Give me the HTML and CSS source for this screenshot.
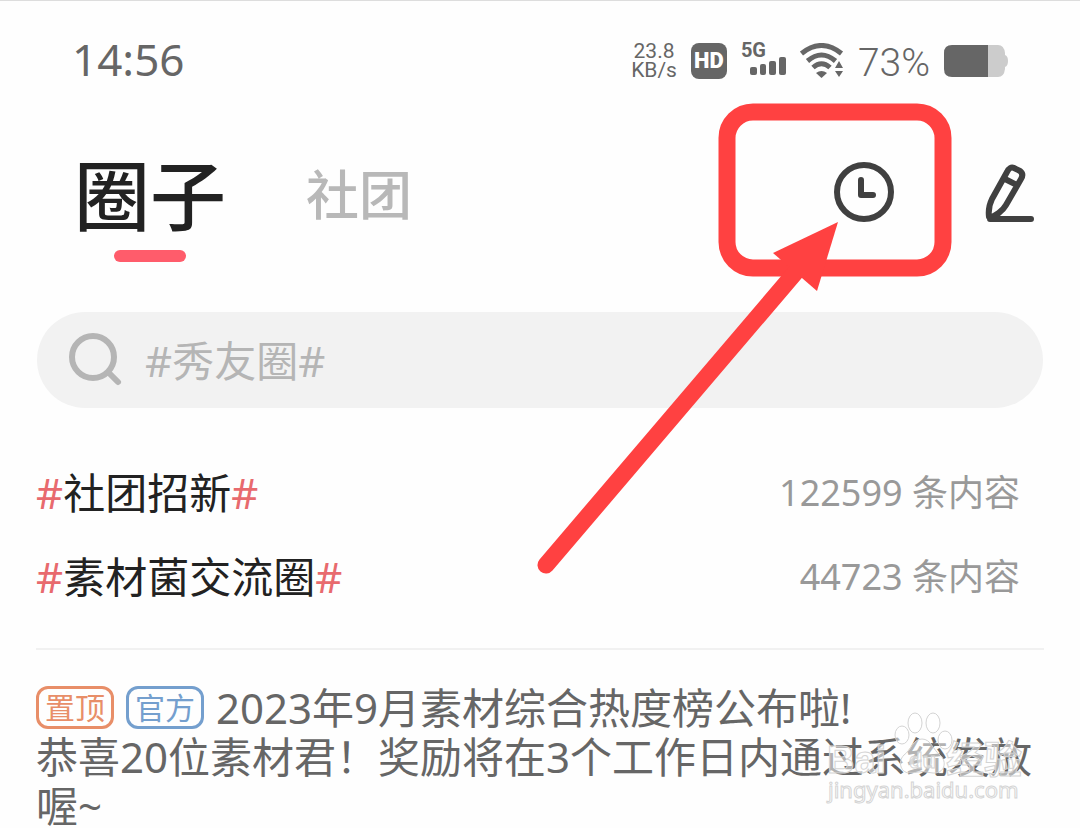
FILE: index.html
```html
<!DOCTYPE html>
<html lang="zh-CN">
<head>
<meta charset="utf-8">
<meta name="viewport" content="width=device-width, initial-scale=1">
<title>圈子</title>
<link rel="stylesheet" href="styles.css">
</head>

<body>
<div class="page">

	<!-- 状态栏 -->
	<div class="status">
		<span class="time">14:56</span>
		<div class="status-right">
			<span class="speed">23.8<br>KB/s</span>
			<span class="hd">HD</span>
			<div class="signal">
				<span>5G</span>
				<svg width="36" height="18" viewBox="0 0 36 18" fill="#666">
					<rect x="0" y="10" width="7" height="8" rx="2"/>
					<rect x="10" y="7" width="6" height="11" rx="2"/>
					<rect x="19" y="4" width="7" height="14" rx="2"/>
					<rect x="29" y="0" width="7" height="18" rx="2"/>
				</svg>
			</div>
			<svg class="wifi" width="44" height="36" viewBox="0 0 44 36">
				<g fill="none" stroke="#666" stroke-width="5">
					<path d="M1.500 10.500Q21.500 -5.500 41.500 10.500"/>
					<path d="M7.500 18Q21.500 6 35.500 18"/>
					<path d="M13 24.500Q21.500 17 30 24.500"/>
				</g>
				<path d="M16 30Q21.500 26 27 30L21.500 35Z" fill="#666"/>
				<path d="M35 25L39 18L43 25ZM35 28L39 34L43 28Z" fill="#666"/>
			</svg>
			<span class="percent">73%</span>
			<svg class="battery" width="64" height="32" viewBox="0 0 64 32">
				<path d="M44 0H54Q60 0 61 8V10Q64 11 64 16Q64 21 61 22V24Q60 32 54 32H44Z" fill="#ccc"/>
				<path d="M8 0H44V32H8Q0 32 0 24V8Q0 0 8 0Z" fill="#666"/>
			</svg>
		</div>
	</div>

	<!-- 顶部导航 -->
	<div class="header">
		<div class="tabs">
			<button class="tab active">圈子</button>
			<button class="tab">社团</button>
		</div>
		<div class="tools">
			<button class="tool" aria-label="历史">
				<svg width="60" height="60" viewBox="0 0 60 60" fill="none" stroke="#404040" stroke-width="6" stroke-linecap="round" stroke-linejoin="round">
					<circle cx="30" cy="30" r="27"/>
					<path d="M27 18V33H39"/>
				</svg>
			</button>
			<button class="tool" aria-label="发布">
				<svg width="50" height="60" viewBox="0 0 50 60" fill="none" stroke="#404040" stroke-width="6" stroke-linecap="round" stroke-linejoin="round">
					<path d="M4 55C3 47 4 43 7 37L22 10Q25 4 29 6L35 9Q39 12 36 17L21 43C17 50 11 53 5 56ZM20 17L32 23M5 57H46"/>
				</svg>
			</button>
		</div>
	</div>

	<!-- 搜索 -->
	<label class="search">
		<svg width="54" height="54" viewBox="0 0 54 54" fill="none" stroke="#b5b5b5" stroke-width="6" stroke-linecap="round">
			<circle cx="24" cy="24" r="21"/>
			<path d="M40 40L49 49"/>
		</svg>
		<input type="text" placeholder="#秀友圈#" aria-label="搜索">
	</label>

	<!-- 话题 -->
	<ul class="topics">
		<li>
			<a href="#"><i>#</i>社团招新<i>#</i></a>
			<span class="count">122599 条内容</span>
		</li>
		<li>
			<a href="#"><i>#</i>素材菌交流圈<i>#</i></a>
			<span class="count">44723 条内容</span>
		</li>
	</ul>

	<!-- 公告 -->
	<div class="post">
		<div class="post-title">
			<span class="tag top">置顶</span>
			<span class="tag official">官方</span>
			<span>2023年9月素材综合热度榜公布啦!</span>
		</div>
		<p>恭喜20位素材君！奖励将在3个工作日内通过系统发放喔~</p>
	</div>

	<!-- 箭头标注 -->
	<svg class="mark" width="425" height="480" viewBox="530 100 425 480">
		<rect x="727" y="112" width="216" height="156" rx="26" fill="none" stroke="#ff4141" stroke-width="17"/>
		<path d="M546 565L800 267" stroke="#ff4141" stroke-width="17" stroke-linecap="round"/>
		<path d="M838 222L773 253L817 291Z" fill="#ff4141"/>
	</svg>

	<!-- 水印 -->
	<svg class="watermark" width="200" height="100" viewBox="825 708 200 100">
		<g fill="#fff" fill-opacity=".5" stroke="#d4d4d4" stroke-width="1">
			<ellipse cx="902" cy="735" rx="7" ry="9"/>
			<ellipse cx="915" cy="723" rx="7" ry="10"/>
			<ellipse cx="933" cy="723" rx="7" ry="10"/>
			<ellipse cx="945" cy="740" rx="7" ry="9"/>
			<path d="M922 739C913 739 911 750 904 755C897 762 901 774 911 773Q922 770 933 773C944 774 948 762 940 755C933 750 931 739 922 739Z"/>
			<text class="brand" x="827" y="773">Bai</text>
			<text class="brand small" x="909" y="768">du</text>
			<text class="brand" x="946" y="773">经验</text>
			<text class="site" x="828" y="798">jingyan.baidu.com</text>
		</g>
	</svg>
</div>
</body>

</html>
```
FILE: styles.css
```css
*
{
	margin:0;
	padding:0;
	box-sizing:border-box;
}
html
{
	scrollbar-width:none;
}
body
{
	background-color:#fefefe;
	color:#222;
	font-family:"Noto Sans","Noto Sans CJK SC",sans-serif;
}
button, input
{
	border:0;
	background:none;
	font-family:inherit;
}
.page
{
	position:relative;
	border-top:1px solid #ddd;
}

/* 状态栏 */
.status
{
	display:flex;
	justify-content:space-between;
	align-items:center;
	height:120px;
	padding:0 72px;
	color:#666;
}
.time
{
	padding-bottom:4px;
	font-size:44px;
}
.status-right
{
	display:flex;
	align-items:center;
	gap:14px;
}
.speed
{
	font-family:Roboto,sans-serif;
	font-size:21px;
	line-height:19px;
	text-align:center;
}
.hd
{
	width:36px;
	border-radius:8px;
	background-color:#666;
	color:#fff;
	font-family:Roboto,sans-serif;
	font-size:22px;
	font-weight:900;
	line-height:36px;
	text-align:center;
}
.signal
{
	display:flex;
	flex-direction:column;
	align-items:flex-end;
	width:45px;
	padding-bottom:4px;
}
.signal span
{
	align-self:flex-start;
	font-family:Roboto,sans-serif;
	font-size:20px;
	font-weight:700;
	line-height:14px;
}
.percent
{
	padding-top:4px;
	font-family:Roboto,sans-serif;
	font-size:39px;
	font-weight:300;
}

/* 导航 */
.header
{
	display:flex;
	justify-content:space-between;
	padding:26px 45px 0 74px;
	height:191px;
}
.tabs
{
	display:flex;
	align-items:flex-start;
	gap:80px;
}
.tab
{
	color:#b8b8b8;
	font-size:53px;
	font-weight:500;
	line-height:96px;
}
.active
{
	color:#222;
	font-size:76px;
	line-height:98px;
}
.active::after
{
	content:"";
	display:block;
	width:72px;
	height:12px;
	margin:5px auto 0;
	border-radius:6px;
	background-color:#ff5c6b;
}
.tools
{
	display:flex;
	align-items:flex-start;
	gap:91px;
	padding-top:15px;
}
.tool svg
{
	display:block;
}

/* 搜索框 */
.search
{
	display:flex;
	align-items:center;
	gap:22px;
	height:96px;
	margin:0 37px;
	padding:0 32px;
	border-radius:48px;
	background-color:#f2f2f2;
}
.search input
{
	flex:1;
	min-width:0;
	padding-top:2px;
	color:#222;
	font-size:42px;
	line-height:60px;
	outline:none;
}
.search input::placeholder
{
	color:#b5b5b5;
}

/* 话题列表 */
.topics
{
	margin:0 36px;
	padding:40px 0 32px;
	border-bottom:2px solid #f1f1f1;
	list-style:none;
}
.topics li
{
	display:flex;
	justify-content:space-between;
	align-items:center;
	height:84px;
	padding-right:24px;
}
.topics a
{
	color:#222;
	font-size:42px;
	text-decoration:none;
}
.topics i
{
	color:#e86a6e;
	font-style:normal;
}
.count
{
	color:#999;
	font-size:36px;
}

/* 公告 */
.post
{
	padding:33px 36px 0;
	color:#666;
	font-size:42px;
	line-height:49px;
}
.post-title
{
	display:flex;
	align-items:center;
	gap:12px;
}
.tag
{
	width:78px;
	border:3px solid;
	border-radius:12px;
	font-size:30px;
	line-height:37px;
	text-align:center;
}
.top
{
	color:#e88e68;
}
.official
{
	color:#749fce;
}

/* 浮层 */
.mark
{
	position:absolute;
	top:99px;
	right:125px;
	pointer-events:none;
}
.watermark
{
	position:absolute;
	top:707px;
	right:55px;
	pointer-events:none;
}
.brand
{
	font:bold 38px "Liberation Sans","Noto Sans CJK SC",sans-serif;
}
.small
{
	font-size:22px;
}
.site
{
	font:22px "Noto Sans",sans-serif;
}
```
